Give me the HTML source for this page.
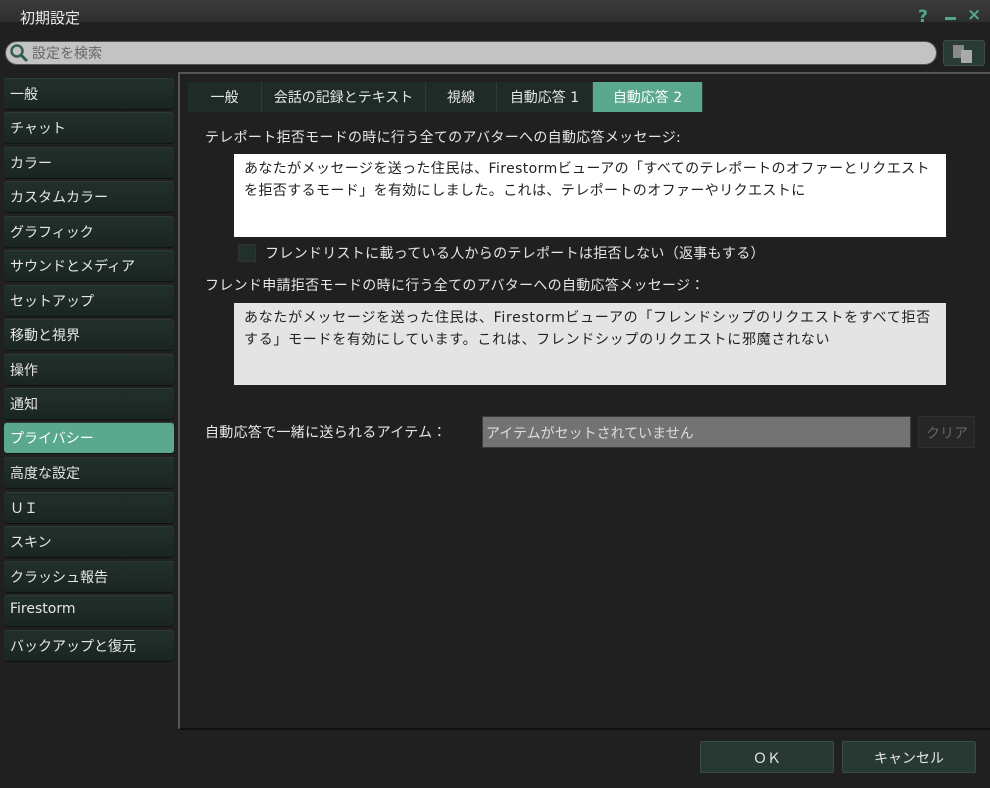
<!DOCTYPE html>
<html><head><meta charset="utf-8"><style>
*{box-sizing:border-box;margin:0;padding:0}
body{width:990px;height:788px;background:#202020;font-family:"DejaVu Sans","Noto Sans CJK JP",sans-serif;color:#e6e6e6;position:relative;overflow:hidden;font-size:14px}
.a{position:absolute}
.title{left:0;top:0;width:990px;height:22px;background:linear-gradient(#3c3c3c,#2e2e2e);}
.title span{position:absolute;left:20px;top:7px;font-size:15px;color:#e8e8e8}
.side div{position:absolute;left:4px;width:170px;height:31px;background:linear-gradient(#22302b,#1a2521);border-radius:3px;box-shadow:0 1px 0 #0e1412, inset 0 1px 0 #2c3b35;padding:6px 0 0 6px;font-size:14px;color:#e6e6e6}
.side div.on{background:#5aa88d;color:#fff}
.tab{position:absolute;top:82px;height:30px;background:#1f2b27;border-right:1px solid #2f3d38;font-size:14px;text-align:center;padding-top:5px}
.box{position:absolute;font-size:14px;line-height:22px;color:#222;padding:4px 10px;letter-spacing:0.4px}
.btn{position:absolute;height:32px;background:#283833;border:1px solid #3a4b45;border-radius:2px;text-align:center;padding-top:6px;font-size:14px}
</style></head><body>
<div class="a title"><span>初期設定</span></div>
<div class="a" style="left:918px;top:7px;color:#4fa888;font-weight:bold;font-size:17px">?</div>
<div class="a" style="left:945px;top:17px;width:11px;height:3px;background:#4fa888"></div>
<div class="a" style="left:967px;top:5px;color:#4fa888;font-weight:bold;font-size:17px">×</div>
<div class="a" style="left:5px;top:41px;width:932px;height:24px;background:#c3c3c3;border-radius:12px;border:1px solid #555"></div>
<svg class="a" style="left:8px;top:42px" width="22" height="22"><circle cx="9" cy="9" r="5.5" fill="none" stroke="#2f5f4d" stroke-width="2.5"/><line x1="13" y1="13" x2="19" y2="19" stroke="#2f5f4d" stroke-width="3"/></svg>
<div class="a" style="left:32px;top:43px;color:#666;font-size:14px">設定を検索</div>
<div class="a" style="left:943px;top:40px;width:42px;height:26px;background:#2a3b35;border:1px solid #3b4d46;border-radius:3px"></div>
<div class="a" style="left:953px;top:45px;width:11px;height:13px;background:#888"></div>
<div class="a" style="left:961px;top:50px;width:11px;height:13px;background:#aaa"></div>
<div class="a" style="left:178px;top:72px;width:812px;height:658px;border-left:2px solid #555;border-top:2px solid #555;border-bottom:2px solid #111"></div>
<div class="side">
<div style="top:78px">一般</div><div style="top:112px">チャット</div><div style="top:147px">カラー</div><div style="top:181px">カスタムカラー</div><div style="top:216px">グラフィック</div><div style="top:250px">サウンドとメディア</div><div style="top:285px">セットアップ</div><div style="top:319px">移動と視界</div><div style="top:354px">操作</div><div style="top:388px">通知</div><div class="on" style="top:422px">プライバシー</div><div style="top:457px">高度な設定</div><div style="top:492px">ＵＩ</div><div style="top:526px">スキン</div><div style="top:561px">クラッシュ報告</div><div style="top:595px">Firestorm</div><div style="top:630px">バックアップと復元</div>
</div>
<div class="tab" style="left:188px;width:74px">一般</div>
<div class="tab" style="left:262px;width:164px">会話の記録とテキスト</div>
<div class="tab" style="left:426px;width:71px">視線</div>
<div class="tab" style="left:497px;width:96px">自動応答 1</div>
<div class="tab" style="left:593px;width:110px;background:#5aa88d;color:#fff">自動応答 2</div>
<div class="a" style="left:205px;top:127px;letter-spacing:0.3px">テレポート拒否モードの時に行う全てのアバターへの自動応答メッセージ:</div>
<div class="box" style="left:234px;top:154px;width:712px;height:83px;background:#fff">あなたがメッセージを送った住民は、Firestormビューアの「すべてのテレポートのオファーとリクエストを拒否するモード」を有効にしました。これは、テレポートのオファーやリクエストに</div>
<div class="a" style="left:238px;top:244px;width:18px;height:18px;background:#22302b;border:1px solid #333"></div>
<div class="a" style="left:265px;top:243px;letter-spacing:0.3px">フレンドリストに載っている人からのテレポートは拒否しない（返事もする）</div>
<div class="a" style="left:205px;top:275px;letter-spacing:0.3px">フレンド申請拒否モードの時に行う全てのアバターへの自動応答メッセージ：</div>
<div class="box" style="left:234px;top:303px;width:712px;height:82px;background:#e4e4e4;letter-spacing:0.7px">あなたがメッセージを送った住民は、Firestormビューアの「フレンドシップのリクエストをすべて拒否する」モードを有効にしています。これは、フレンドシップのリクエストに邪魔されない</div>
<div class="a" style="left:205px;top:422px;letter-spacing:0.3px">自動応答で一緒に送られるアイテム：</div>
<div class="a" style="left:482px;top:416px;width:429px;height:32px;background:#737373;border:1px solid #3a3a3a;padding:6px 3px;color:#ddd">アイテムがセットされていません</div>
<div class="a" style="left:918px;top:416px;width:57px;height:32px;background:#262626;border:1px solid #2f2f2f;border-radius:2px;color:#666;padding:6px 0 0 7px">クリア</div>
<div class="btn" style="left:700px;top:741px;width:134px">ＯＫ</div>
<div class="btn" style="left:842px;top:741px;width:134px">キャンセル</div>
</body></html>
